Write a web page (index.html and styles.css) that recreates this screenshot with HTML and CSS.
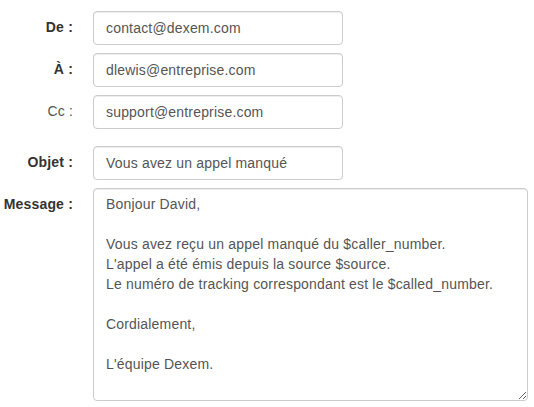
FILE: index.html
```html
<!DOCTYPE html>
<html lang="fr">
<head>
    <meta charset="UTF-8">
    <meta name="viewport" content="width=device-width, initial-scale=1.0">
    <title>Notification d'appel manqué</title>
    <link rel="stylesheet" href="styles.css">
</head>
<body>
    <form class="mail-form">
        <div class="form-row">
            <label class="control-label" for="from">De :</label>
            <input type="text" id="from" class="form-control" value="contact@dexem.com">
        </div>
        <div class="form-row">
            <label class="control-label" for="to">À :</label>
            <input type="text" id="to" class="form-control" value="dlewis@entreprise.com">
        </div>
        <div class="form-row">
            <label class="control-label light" for="cc">Cc :</label>
            <input type="text" id="cc" class="form-control" value="support@entreprise.com">
        </div>

        <div class="form-row subject-row">
            <label class="control-label" for="subject">Objet :</label>
            <input type="text" id="subject" class="form-control" value="Vous avez un appel manqué">
        </div>
        <div class="form-row">
            <label class="control-label" for="message">Message :</label>
            <textarea id="message" class="form-control message">Bonjour David,

Vous avez reçu un appel manqué du $caller_number.
L'appel a été émis depuis la source $source.
Le numéro de tracking correspondant est le $called_number.

Cordialement,

L'équipe Dexem.</textarea>
        </div>
    </form>
</body>
</html>
```

FILE: styles.css
```css
body {
    margin: 0;
    padding: 11px 0 0;
    font-family: "Liberation Sans", Arial, Helvetica, sans-serif;
    font-size: 14px;
    line-height: 1.42857;
    letter-spacing: 0.18px;
    color: #333;
    background: #fff;
}
.mail-form {
    display: flex;
    flex-direction: column;
    gap: 8px;
}
.form-row {
    display: flex;
    align-items: flex-start;
    gap: 20px;
}
.subject-row {
    margin-top: 9px;
}
.control-label {
    width: 73px;
    flex-shrink: 0;
    text-align: right;
    font-weight: bold;
    padding-top: 7px;
    color: #333;
}
.control-label.light {
    font-weight: normal;
    color: #555;
}
.form-control {
    box-sizing: border-box;
    width: 250px;
    height: 34px;
    padding: 6px 12px;
    margin: 0;
    font-family: inherit;
    font-size: 14px;
    line-height: 1.42857;
    letter-spacing: 0.18px;
    color: #555;
    background: #fff;
    border: 1px solid #ccc;
    border-radius: 4px;
    box-shadow: inset 0 1px 1px rgba(0,0,0,0.075);
}
.message {
    width: 435px;
    height: 213px;
    resize: both;
}
```
